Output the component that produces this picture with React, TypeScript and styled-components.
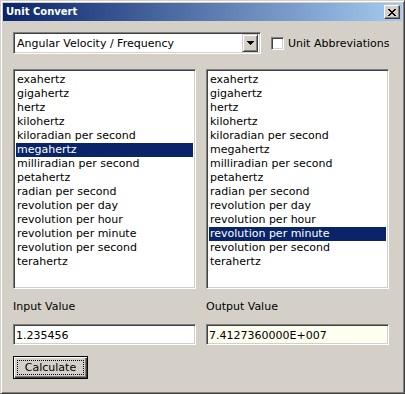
import React from 'react';
import styled, { createGlobalStyle } from 'styled-components';

const FACE = '#D4D0C8';

const GlobalStyle = createGlobalStyle`
	html, body {
		margin: 0;
		padding: 0;
		background: ${FACE};
	}
	body {
		font-family: 'DejaVu Sans', Verdana, sans-serif;
		font-size: 11px;
	}
`;

const units = [
	'exahertz',
	'gigahertz',
	'hertz',
	'kilohertz',
	'kiloradian per second',
	'megahertz',
	'milliradian per second',
	'petahertz',
	'radian per second',
	'revolution per day',
	'revolution per hour',
	'revolution per minute',
	'revolution per second',
	'terahertz',
];

const StyledWindow = styled.div`
	box-sizing: border-box;
	width: 405px;
	height: 394px;
	background: ${FACE};
	border: 1px solid;
	border-color: ${FACE} #404040 #404040 ${FACE};
	box-shadow: inset 1px 1px #ffffff, inset -1px -1px #808080;
	padding: 2px;
	display: flex;
	flex-direction: column;
`;

const TitleBar = styled.div`
	height: 18px;
	display: flex;
	align-items: center;
	justify-content: space-between;
	padding: 0 2px 0 2px;
	background: linear-gradient(to right, #0a246a, #a6caf0);
	color: #ffffff;
	font-weight: bold;
	font-size: 10px;
`;

const TitleText = styled.span`
	padding-left: 1px;
	line-height: 18px;
`;

const CloseButton = styled.div`
	box-sizing: border-box;
	width: 16px;
	height: 14px;
	background: ${FACE};
	border: 1px solid;
	border-color: #ffffff #404040 #404040 #ffffff;
	box-shadow: inset -1px -1px #808080;
	display: flex;
	align-items: center;
	justify-content: center;
`;

const Client = styled.div`
	flex: 1;
	padding: 11px 10px 0 10px;
	display: flex;
	flex-direction: column;
`;

const TopRow = styled.div`
	display: flex;
	align-items: center;
	gap: 10px;
`;

const Sunken = styled.div<{ $bg?: string }>`
	box-sizing: border-box;
	background: ${(p) => p.$bg || '#ffffff'};
	border: 1px solid;
	border-color: #808080 #ffffff #ffffff #808080;
	box-shadow: inset 1px 1px #404040, inset -1px -1px ${FACE};
`;

const Combo = styled(Sunken)`
	width: 248px;
	height: 22px;
	display: flex;
	align-items: center;
	padding: 2px 2px 2px 3px;
	color: #000000;
`;

const ComboText = styled.span`
	flex: 1;
`;

const DropButton = styled.div`
	box-sizing: border-box;
	width: 16px;
	height: 18px;
	background: ${FACE};
	border: 1px solid;
	border-color: ${FACE} #404040 #404040 ${FACE};
	box-shadow: inset 1px 1px #ffffff, inset -1px -1px #808080;
	display: flex;
	align-items: center;
	justify-content: center;
`;

const CheckLabel = styled.label`
	display: flex;
	align-items: center;
	gap: 4px;
	color: #000000;
`;

const CheckBox = styled(Sunken)`
	width: 13px;
	height: 13px;
`;

const Columns = styled.div<{ $gap: number }>`
	display: grid;
	grid-template-columns: 183px 183px;
	column-gap: 10px;
	margin-top: ${(p) => p.$gap}px;
`;

const Column = styled.div`
	display: flex;
	flex-direction: column;
`;

const ListBox = styled(Sunken)`
	height: 220px;
	padding: 3px 2px 2px 2px;
`;

const ListItem = styled.div<{ $selected?: boolean }>`
	height: 14px;
	line-height: 14px;
	padding-left: 1px;
	white-space: nowrap;
	color: ${(p) => (p.$selected ? '#ffffff' : '#000000')};
	background: ${(p) => (p.$selected ? '#0a246a' : 'transparent')};
`;

const FieldLabel = styled.div`
	margin-top: 11px;
	height: 13px;
	line-height: 13px;
	color: #000000;
`;

const TextField = styled(Sunken)`
	height: 21px;
	line-height: 17px;
	padding: 2px 2px;
	color: #000000;
`;

const Button = styled.div`
	box-sizing: border-box;
	margin-top: 11px;
	width: 75px;
	height: 23px;
	border: 1px solid #000000;
	background: ${FACE};
	box-shadow: inset 1px 1px #ffffff, inset -1px -1px #404040, inset -2px -2px #808080;
	padding: 3px;
	display: flex;
`;

const FocusRing = styled.div`
	flex: 1;
	border: 1px dotted #000000;
	display: flex;
	align-items: center;
	justify-content: center;
	color: #000000;
`;

const CloseGlyph = () => (
	<svg width="8" height="7" viewBox="0 0 8 7" shapeRendering="crispEdges">
		<path
			fill="#000"
			d="M0 0h2v1H0zM6 0h2v1H6zM1 1h2v1H1zM5 1h2v1H5zM2 2h4v1H2zM3 3h2v1H3zM2 4h4v1H2zM1 5h2v1H1zM5 5h2v1H5zM0 6h2v1H0zM6 6h2v1H6z"
		/>
	</svg>
);

const ArrowGlyph = () => (
	<svg width="7" height="4" viewBox="0 0 7 4" shapeRendering="crispEdges">
		<path fill="#000" d="M0 0h7v1H0zM1 1h5v1H1zM2 2h3v1H2zM3 3h1v1H3z" />
	</svg>
);

const UnitList = ({ selected }: { selected: number }) => (
	<ListBox>
		{units.map((u, i) => (
			<ListItem key={u} $selected={i === selected}>
				{u}
			</ListItem>
		))}
	</ListBox>
);

const App = () => {
	return (
		<>
			<GlobalStyle />
			<StyledWindow>
				<TitleBar>
					<TitleText>Unit Convert</TitleText>
					<CloseButton>
						<CloseGlyph />
					</CloseButton>
				</TitleBar>
				<Client>
					<TopRow>
						<Combo>
							<ComboText>Angular Velocity / Frequency</ComboText>
							<DropButton>
								<ArrowGlyph />
							</DropButton>
						</Combo>
						<CheckLabel>
							<CheckBox />
							Unit Abbreviations
						</CheckLabel>
					</TopRow>
					<Columns $gap={15}>
						<Column>
							<UnitList selected={5} />
							<FieldLabel>Input Value</FieldLabel>
						</Column>
						<Column>
							<UnitList selected={11} />
							<FieldLabel>Output Value</FieldLabel>
						</Column>
					</Columns>
					<Columns $gap={11}>
						<TextField>1.235456</TextField>
						<TextField $bg="#fffff0">7.4127360000E+007</TextField>
					</Columns>
					<Button>
						<FocusRing>Calculate</FocusRing>
					</Button>
				</Client>
			</StyledWindow>
		</>
	);
};

export default App;
